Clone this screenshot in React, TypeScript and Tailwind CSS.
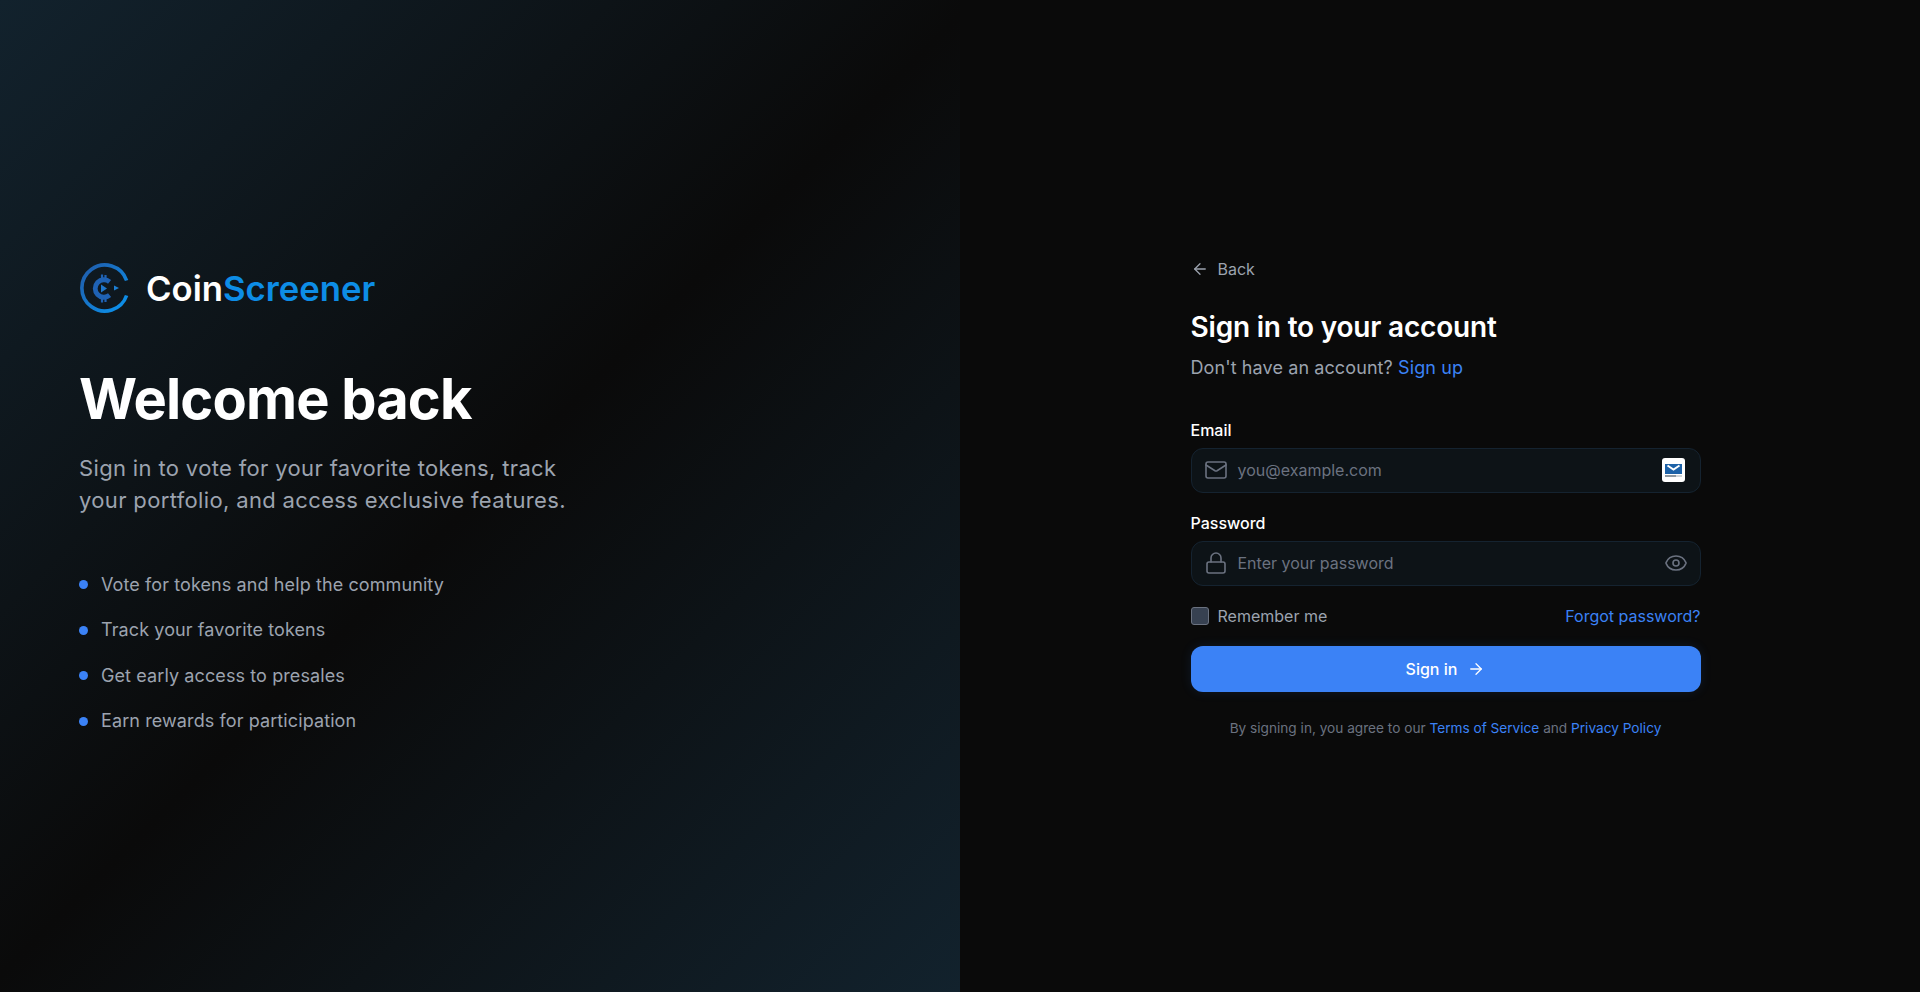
import { ArrowLeft, ArrowRight, Eye, Lock, Mail } from 'lucide-react';

const features = [
  'Vote for tokens and help the community',
  'Track your favorite tokens',
  'Get early access to presales',
  'Earn rewards for participation',
];

function Logo() {
  return (
    <svg width="50" height="50" viewBox="0 0 50 50" fill="none">
      <defs>
        <linearGradient id="ring" x1="4" y1="8" x2="40" y2="44" gradientUnits="userSpaceOnUse">
          <stop offset="0" stopColor="#1f5fae" />
          <stop offset="1" stopColor="#0d8de6" />
        </linearGradient>
      </defs>
      <path d="M47.6 17.5A23 23 0 1 0 47.6 32.5" stroke="url(#ring)" strokeWidth="3.6" />
      <path d="M30.6 18.8A8.75 8.75 0 1 0 30.6 32.2" stroke="#1f62b4" strokeWidth="4.8" />
      <path d="M23 11.5v4M26.5 12v3.5M23 35.5v4M26.5 35.5v3.5" stroke="#1f62b4" strokeWidth="2.2" />
      <path d="M22 21.5l6 4-6 4z" fill="#1f77cc" />
      <path d="M35 22.5l5 2.5-5 2.5z" fill="#1d7fd4" />
    </svg>
  );
}

function MailBadge() {
  return (
    <svg width="23" height="24" viewBox="0 0 23 24" className="rounded-[3px]">
      <rect width="23" height="24" fill="#ffffff" />
      <rect x="3" y="6" width="17" height="10" fill="#1d62a8" />
      <path d="M5.5 7.5l6 4 6-4" fill="none" stroke="#ffffff" strokeWidth="2" />
      <rect x="3" y="17" width="11" height="2" fill="#8f98a0" />
      <rect x="14" y="17" width="6" height="2" fill="#cfd4d8" />
    </svg>
  );
}

export default function App() {
  return (
    <div className="flex h-[992px] w-full bg-[#0a0a0a] font-['Inter',sans-serif] antialiased">
      <div className="flex w-1/2 flex-col justify-center bg-[linear-gradient(135deg,#12222d_0%,#0a0a0a_50%,#12222d_100%)] pt-[6px] pr-20 pl-[79px]">
        <div className="flex items-center gap-[17px]">
          <Logo />
          <span className="text-[34.7px] leading-10 font-semibold text-white">
            Coin<span className="text-[#0d8de6]">Screener</span>
          </span>
        </div>
        <h1 className="mt-[51px] text-[56px] leading-[70px] font-bold tracking-[-0.015em] text-white">Welcome back</h1>
        <p className="mt-[18px] w-[520px] text-[22px] leading-8 tracking-[0.35px] text-[#9ca3af]">
          Sign in to vote for your favorite tokens, track
          <br />
          your portfolio, and access exclusive features.
        </p>
        <ul className="mt-[55px] flex flex-col gap-[17.4px]">
          {features.map((item) => (
            <li key={item} className="flex items-center gap-[13px] text-lg leading-7 tracking-[0.1px] text-[#9ca3af]">
              <span className="h-[9px] w-[9px] rounded-full bg-[#3b82f6]" />
              {item}
            </li>
          ))}
        </ul>
      </div>
      <div className="flex w-1/2 items-center justify-center pt-[2px] pl-[11px]">
        <div className="w-[510px]">
          <a className="flex items-center gap-[9px] text-base leading-6 text-[#9ca3af]">
            <ArrowLeft size={18} strokeWidth={1.7} />
            Back
          </a>
          <h2 className="mt-7 text-[28px] leading-9 font-semibold tracking-[-0.2px] text-white">
            Sign in to your account
          </h2>
          <p className="mt-[9px] text-lg leading-7 tracking-[0.1px] text-[#9ca3af]">
            Don't have an account? <span className="text-[#3b82f6]">Sign up</span>
          </p>
          <label className="mt-9 block text-base leading-6 font-medium text-white">Email</label>
          <div className="mt-1.5 flex h-[45px] items-center rounded-xl border border-[#152330] bg-[#0d1317] pr-[15px] pl-3">
            <Mail size={24} strokeWidth={1.6} className="text-[#6b7280]" />
            <span className="ml-2.5 flex-1 text-base text-[#6b7280]">you@example.com</span>
            <MailBadge />
          </div>
          <label className="mt-[18px] block text-base leading-6 font-medium text-white">Password</label>
          <div className="mt-1.5 flex h-[45px] items-center rounded-xl border border-[#152330] bg-[#0d1317] pr-3 pl-3">
            <Lock size={24} strokeWidth={1.6} className="text-[#6b7280]" />
            <span className="ml-2.5 flex-1 text-base text-[#6b7280]">Enter your password</span>
            <Eye size={24} strokeWidth={1.6} className="text-[#6b7280]" />
          </div>
          <div className="mt-[18px] flex items-center justify-between">
            <div className="flex items-center gap-[9px]">
              <span className="h-[18px] w-[18px] rounded-[3px] border border-[#6b7280] bg-[#374151]" />
              <span className="text-base leading-6 text-[#9ca3af]">Remember me</span>
            </div>
            <span className="text-base leading-6 text-[#3b82f6]">Forgot password?</span>
          </div>
          <button className="mt-[18px] flex h-[46px] w-full items-center justify-center gap-2.5 rounded-xl bg-[#3b82f6] text-base font-medium text-white shadow-[0_0_12px_rgba(59,130,246,0.12)]">
            Sign in
            <ArrowRight size={18} strokeWidth={1.7} />
          </button>
          <p className="mt-[26px] text-center text-[13.65px] leading-5 text-[#6b7280]">
            By signing in, you agree to our <span className="text-[#3b82f6]">Terms of Service</span> and{' '}
            <span className="text-[#3b82f6]">Privacy Policy</span>
          </p>
        </div>
      </div>
    </div>
  );
}
